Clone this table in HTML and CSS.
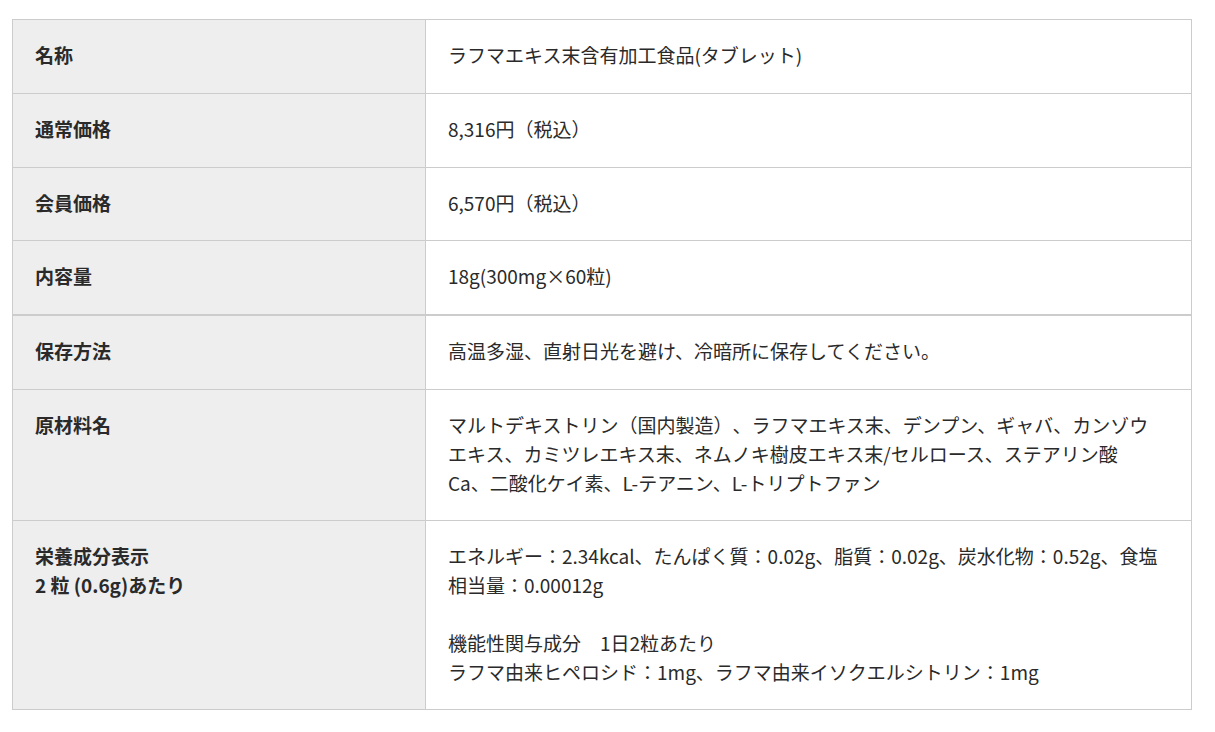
FILE: index.html
```html
<!DOCTYPE html>
<html lang="ja">
<head>
<meta charset="utf-8">
<title>商品情報</title>
<link rel="stylesheet" href="styles.css">
</head>
<body>
<table class="spec">
  <tbody>
    <tr>
      <th class="label">名称</th>
      <td class="value">ラフマエキス末含有加工食品(タブレット)</td>
    </tr>
    <tr>
      <th class="label">通常価格</th>
      <td class="value">8,316円（税込）</td>
    </tr>
    <tr>
      <th class="label">会員価格</th>
      <td class="value">6,570円（税込）</td>
    </tr>
    <tr class="thick">
      <th class="label">内容量</th>
      <td class="value">18g(300mg×60粒)</td>
    </tr>
    <tr>
      <th class="label">保存方法</th>
      <td class="value">高温多湿、直射日光を避け、冷暗所に保存してください。</td>
    </tr>
    <tr>
      <th class="label">原材料名</th>
      <td class="value">マルトデキストリン（国内製造）、ラフマエキス末、デンプン、ギャバ、カンゾウエキス、カミツレエキス末、ネムノキ樹皮エキス末/セルロース、ステアリン酸<br>Ca、二酸化ケイ素、L-テアニン、L-トリプトファン</td>
    </tr>
    <tr>
      <th class="label">栄養成分表示<br>2 粒 (0.6g)あたり</th>
      <td class="value">エネルギー：2.34kcal、たんぱく質：0.02g、脂質：0.02g、炭水化物：0.52g、食塩相当量：0.00012g<br><br>機能性関与成分　1日2粒あたり<br>ラフマ由来ヒペロシド：1mg、ラフマ由来イソクエルシトリン：1mg</td>
    </tr>
  </tbody>
</table>
</body>
</html>
```

FILE: styles.css
```css
html, body {
  margin: 0;
  padding: 0;
  background: #fff;
}
body {
  padding: 19px 23px 0 12px;
  font-family: "Noto Sans CJK JP", sans-serif;
  color: #2a2a2a;
}
.spec {
  width: 1180px;
  border-collapse: collapse;
  table-layout: fixed;
}
.spec th,
.spec td {
  border: 1px solid #ccc;
  padding: 21px 24px 23px 22px;
  font-size: 19px;
  line-height: 28.8px;
  vertical-align: top;
  text-align: left;
  letter-spacing: 0;
  text-spacing-trim: space-all;
}
.label {
  width: 366px;
  background: #eee;
  font-weight: 700;
}
.value {
  font-weight: 400;
}
.thick th,
.thick td {
  border-bottom-width: 2px;
}
```
